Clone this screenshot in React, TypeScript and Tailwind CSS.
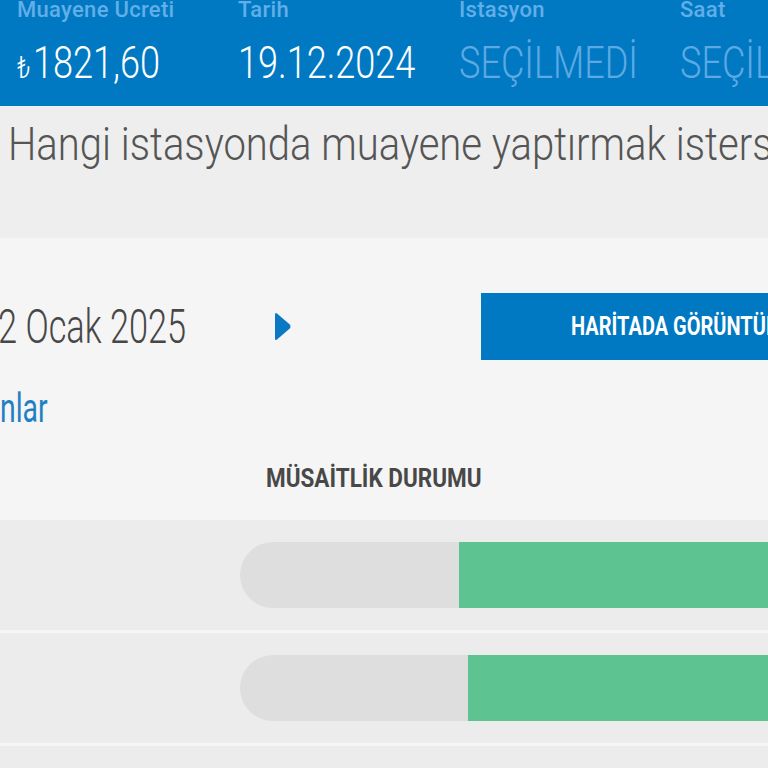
import React from "react";

type Summary = { label: string; value: string; muted?: boolean; currency?: boolean };

const summary: Summary[] = [
  { label: "Muayene Ücreti", value: "1821,60", currency: true },
  { label: "Tarih", value: "19.12.2024" },
  { label: "İstasyon", value: "SEÇİLMEDİ", muted: true },
  { label: "Saat", value: "SEÇİLMEDİ", muted: true },
];

const slots = [{ busy: 219 }, { busy: 228 }];

function Narrow({ children, className = "" }: { children: React.ReactNode; className?: string }) {
  return <span className={"inline-block origin-left whitespace-nowrap " + className}>{children}</span>;
}

export default function App() {
  return (
    <div className="w-[768px] h-[768px] overflow-hidden bg-[#eeeeee] font-['Roboto',sans-serif]">
      <header className="h-[106px] overflow-hidden bg-[#0079c2]">
        <div className="-mt-[4px] grid grid-cols-[221px_221px_221px_221px] pl-[17px]">
          {summary.map((s) => (
            <div key={s.label} className="flex flex-col">
              <div className="h-[28px] text-[22px] font-medium leading-[28px] tracking-[0.3px] text-[#62aee8]">
                <Narrow>{s.label}</Narrow>
              </div>
              <div
                className={
                  "mt-[17px] h-[44px] text-[44px] font-light leading-none " +
                  (s.muted ? "text-[#5ea9e3]" : "text-white")
                }
              >
                <Narrow className="scale-x-[0.82]">
                  {s.currency && <span className="mr-[3px] text-[32px]">₺</span>}
                  {s.value}
                </Narrow>
              </div>
            </div>
          ))}
        </div>
      </header>

      <div className="h-[132px] pl-[8px] pt-[15px]">
        <div className="h-[46px] text-[46px] font-light leading-none text-[#555555]">
          <Narrow className="scale-x-[0.87]">Hangi istasyonda muayene yaptırmak istersiniz?</Narrow>
        </div>
      </div>

      <section className="bg-[#f5f5f5] pt-[55px]">
        <div className="flex h-[67px] items-center">
          <div className="-ml-[2px] w-[276px] shrink-0 text-[48px] font-light leading-none text-[#474747]">
            <Narrow className="scale-x-[0.715]">2 Ocak 2025</Narrow>
          </div>
          <svg width="18" height="31" viewBox="0 0 18 31" className="shrink-0">
            <path d="M3 2.5 L15.5 13.2 Q17.5 15.5 15.5 17.8 L3 28.5 Q1 30 1 27.5 L1 3.5 Q1 1 3 2.5 Z" fill="#0a78c2" />
          </svg>
          <button className="ml-[189px] flex h-[67px] w-[420px] shrink-0 items-center bg-[#0079c2] pl-[90px] text-[25px] font-bold leading-none text-white">
            <Narrow className="scale-x-[0.8]">HARİTADA GÖRÜNTÜLE</Narrow>
          </button>
        </div>

        <div className="mt-[29px] h-[40px] text-[40px] leading-none text-[#1f80c3]">
          <Narrow className="scale-x-[0.71]">nlar</Narrow>
        </div>

        <div className="mt-[36px] pb-[29px] pl-[266px]">
          <div className="h-[26px] text-[26px] font-bold leading-none text-[#484848]">
            <Narrow className="scale-x-[0.865]">MÜSAİTLİK DURUMU</Narrow>
          </div>
        </div>

        <div className="flex flex-col gap-[3px] bg-[#f6f6f6] pb-[3px]">
          {slots.map((s, i) => (
            <div key={i} className="flex h-[110px] items-center bg-[#ececec] pl-[240px]">
              <div className="flex h-[66px] flex-1 overflow-hidden rounded-l-[33px] bg-[#dedede]">
                <div className="shrink-0" style={{ width: s.busy }} />
                <div className="flex-1 bg-[#5dc491]" />
              </div>
            </div>
          ))}
          <div className="h-[40px] bg-[#ececec]" />
        </div>
      </section>
    </div>
  );
}
